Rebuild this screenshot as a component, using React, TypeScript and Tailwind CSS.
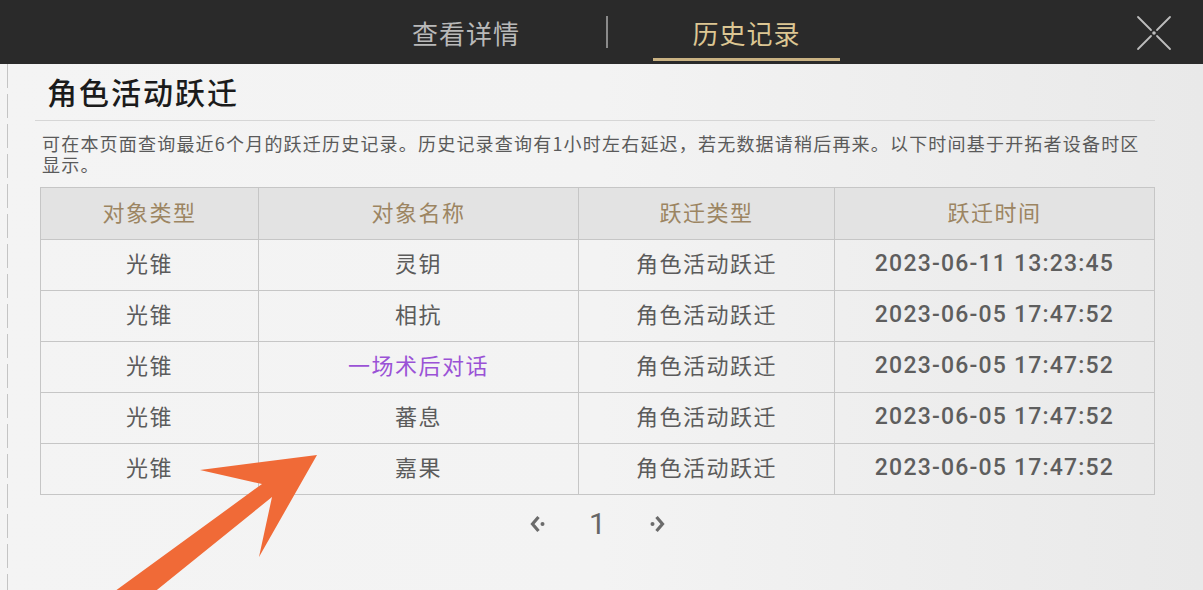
import React from "react";

const ROWS = [
  { type: "光锥", name: "灵钥", kind: "角色活动跃迁", time: "2023-06-11 13:23:45" },
  { type: "光锥", name: "相抗", kind: "角色活动跃迁", time: "2023-06-05 17:47:52" },
  { type: "光锥", name: "一场术后对话", kind: "角色活动跃迁", time: "2023-06-05 17:47:52", rare: true },
  { type: "光锥", name: "蕃息", kind: "角色活动跃迁", time: "2023-06-05 17:47:52" },
  { type: "光锥", name: "嘉果", kind: "角色活动跃迁", time: "2023-06-05 17:47:52" },
];

const cjk = { fontFamily: '"Noto Sans CJK SC", "Noto Sans", sans-serif' };
const num = { fontFamily: 'Roboto, "Noto Sans", sans-serif' };

function CloseIcon() {
  return (
    <svg width="36" height="36" viewBox="0 0 36 36" fill="none">
      <g stroke="#bdbdbd" strokeWidth="1.8" strokeLinecap="round">
        <line x1="2" y1="2" x2="15" y2="15" />
        <line x1="34" y1="2" x2="21" y2="15" />
        <line x1="2" y1="34" x2="15" y2="21" />
        <line x1="34" y1="34" x2="21" y2="21" />
      </g>
      <circle cx="18" cy="18" r="1.8" fill="#bdbdbd" />
    </svg>
  );
}

function Chevron({ dir }: { dir: "left" | "right" }) {
  return (
    <svg width="18" height="20" viewBox="0 0 18 20" fill="none">
      {dir === "left" ? (
        <>
          <path d="M9.5 3 L3.5 10 L9.5 17" stroke="#6b6b6b" strokeWidth="3.2" />
          <circle cx="13.5" cy="10" r="2" fill="#6b6b6b" />
        </>
      ) : (
        <>
          <path d="M8.5 3 L14.5 10 L8.5 17" stroke="#6b6b6b" strokeWidth="3.2" />
          <circle cx="4.5" cy="10" r="2" fill="#6b6b6b" />
        </>
      )}
    </svg>
  );
}

export default function App() {
  return (
    <main className="relative w-[1203px] h-[590px] overflow-hidden bg-gradient-to-r from-[#f4f4f4] via-[#f3f3f3] to-[#e9e9e9]" style={cjk}>

      {/* TOP BAR */}
      <header className="relative h-[64px] bg-[#2a2a2a] flex items-center pl-[366px]">
        <div className="w-[200px] flex justify-center">
          <span className="text-[26px] text-[#b9b9b9] tracking-[1px]">查看详情</span>
        </div>
        <div className="w-[2px] h-[32px] bg-[#8a8a8a] ml-[40px]" />
        <div className="relative w-[187px] h-[64px] ml-[45px] flex items-center justify-center">
          <span className="text-[26px] text-[#dcc693] tracking-[1px]">历史记录</span>
          <div className="absolute left-0 right-0 bottom-[3px] h-[3px] bg-[#c9b283]" />
        </div>
        <button className="absolute right-[31px] top-[15px]">
          <CloseIcon />
        </button>
      </header>

      {/* CONTENT */}
      <div className="relative flex">
        <div className="w-[2px] ml-[7px] h-[526px] bg-[repeating-linear-gradient(to_bottom,#c4c4c4_0,#c4c4c4_24px,transparent_24px,transparent_30px)]" />

        <div className="flex-1 pl-[32px] pr-[48px]">
          <h1 className="pl-[7px] pt-[9px] text-[30px] leading-[36px] text-[#1b1b1b] font-medium tracking-[2px]">
            角色活动跃迁
          </h1>
          <div className="mt-[11px] h-px bg-[#d6d6d6] -ml-[5px]" />

          <p className="mt-[12px] pl-[2px] pr-[4px] text-[18px] leading-[21px] text-[#5a5a5a] tracking-[1.2px]">
            可在本页面查询最近6个月的跃迁历史记录。历史记录查询有1小时左右延迟，若无数据请稍后再来。以下时间基于开拓者设备时区显示。
          </p>

          <table className="mt-[12px] border-collapse table-fixed w-[1114px]">
            <colgroup>
              <col className="w-[218px]" />
              <col className="w-[320px]" />
              <col className="w-[256px]" />
              <col className="w-[320px]" />
            </colgroup>
            <thead>
              <tr className="h-[52px] bg-[#e3e3e3]">
                {["对象类型", "对象名称", "跃迁类型", "跃迁时间"].map((h) => (
                  <th key={h} className="border border-[#c6c6c6] pb-[5px] text-[22px] font-normal text-[#9c8562] tracking-[1.5px]">
                    {h}
                  </th>
                ))}
              </tr>
            </thead>
            <tbody>
              {ROWS.map((r, i) => (
                <tr key={i} className="h-[51px]">
                  <td className="border border-[#c6c6c6] pb-[6px] text-center text-[22px] text-[#5b5b5b] tracking-[1.5px]">{r.type}</td>
                  <td className={`border border-[#c6c6c6] pb-[6px] text-center text-[22px] tracking-[1.5px] ${r.rare ? "text-[#9a52d6]" : "text-[#5b5b5b]"}`}>
                    {r.name}
                  </td>
                  <td className="border border-[#c6c6c6] pb-[6px] text-center text-[22px] text-[#5b5b5b] tracking-[1.5px]">{r.kind}</td>
                  <td className="border border-[#c6c6c6] pb-[1px] text-center text-[23px] font-medium text-[#5e5e5e] tracking-[1.2px]" style={num}>
                    {r.time}
                  </td>
                </tr>
              ))}
            </tbody>
          </table>

          {/* PAGINATION */}
          <div className="mt-[14px] flex items-center justify-center gap-[42px]">
            <Chevron dir="left" />
            <span className="text-[30px] leading-[30px] text-[#666666]" style={num}>1</span>
            <Chevron dir="right" />
          </div>
        </div>
      </div>

      {/* ANNOTATION ARROW */}
      <svg className="absolute left-0 top-0 pointer-events-none" width="1203" height="590" viewBox="0 0 1203 590">
        <polygon
          points="317,455 200,470 262,484 100,602 142,602 272,497 259,557"
          fill="#f06a37"
        />
      </svg>
    </main>
  );
}
